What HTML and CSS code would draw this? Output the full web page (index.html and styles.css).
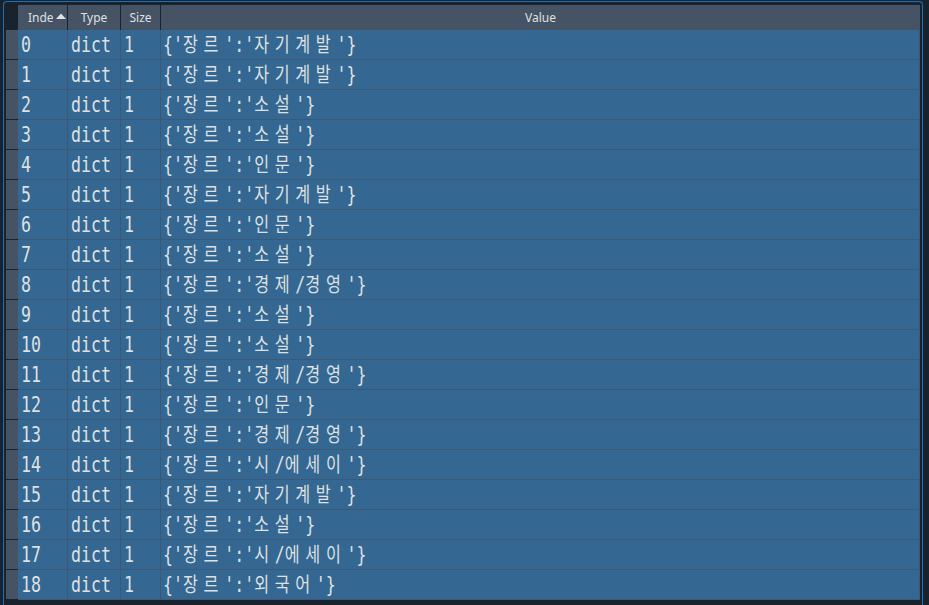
FILE: index.html
```html
<!DOCTYPE html>
<html lang="ko">
<head>
<meta charset="utf-8">
<title>Variable Explorer</title>
<link rel="stylesheet" href="styles.css">
</head>
<body>
<div class="frame">
  <div class="table">
    <div class="row head">
      <div class="rh corner"></div>
      <div class="hc idx"><span class="htxt">Index</span><svg class="sort" width="10" height="6" viewBox="0 0 10 6"><path d="M0 6 L5 0.5 L10 6 Z" fill="#dfe1e2"/></svg></div>
      <div class="hc">Type</div>
      <div class="hc">Size</div>
      <div class="hc last">Value</div>
    </div>
    <div class="row"><div class="rh"></div><div class="c"><span class="t">0</span></div><div class="c"><span class="t">dict</span></div><div class="c"><span class="t">1</span></div><div class="c v"><span class="t">{'<span class="k">장르</span>':'<span class="k">자기계발</span>'}</span></div></div>
    <div class="row"><div class="rh"></div><div class="c"><span class="t">1</span></div><div class="c"><span class="t">dict</span></div><div class="c"><span class="t">1</span></div><div class="c v"><span class="t">{'<span class="k">장르</span>':'<span class="k">자기계발</span>'}</span></div></div>
    <div class="row"><div class="rh"></div><div class="c"><span class="t">2</span></div><div class="c"><span class="t">dict</span></div><div class="c"><span class="t">1</span></div><div class="c v"><span class="t">{'<span class="k">장르</span>':'<span class="k">소설</span>'}</span></div></div>
    <div class="row"><div class="rh"></div><div class="c"><span class="t">3</span></div><div class="c"><span class="t">dict</span></div><div class="c"><span class="t">1</span></div><div class="c v"><span class="t">{'<span class="k">장르</span>':'<span class="k">소설</span>'}</span></div></div>
    <div class="row"><div class="rh"></div><div class="c"><span class="t">4</span></div><div class="c"><span class="t">dict</span></div><div class="c"><span class="t">1</span></div><div class="c v"><span class="t">{'<span class="k">장르</span>':'<span class="k">인문</span>'}</span></div></div>
    <div class="row"><div class="rh"></div><div class="c"><span class="t">5</span></div><div class="c"><span class="t">dict</span></div><div class="c"><span class="t">1</span></div><div class="c v"><span class="t">{'<span class="k">장르</span>':'<span class="k">자기계발</span>'}</span></div></div>
    <div class="row"><div class="rh"></div><div class="c"><span class="t">6</span></div><div class="c"><span class="t">dict</span></div><div class="c"><span class="t">1</span></div><div class="c v"><span class="t">{'<span class="k">장르</span>':'<span class="k">인문</span>'}</span></div></div>
    <div class="row"><div class="rh"></div><div class="c"><span class="t">7</span></div><div class="c"><span class="t">dict</span></div><div class="c"><span class="t">1</span></div><div class="c v"><span class="t">{'<span class="k">장르</span>':'<span class="k">소설</span>'}</span></div></div>
    <div class="row"><div class="rh"></div><div class="c"><span class="t">8</span></div><div class="c"><span class="t">dict</span></div><div class="c"><span class="t">1</span></div><div class="c v"><span class="t">{'<span class="k">장르</span>':'<span class="k">경제</span>/<span class="k">경영</span>'}</span></div></div>
    <div class="row"><div class="rh"></div><div class="c"><span class="t">9</span></div><div class="c"><span class="t">dict</span></div><div class="c"><span class="t">1</span></div><div class="c v"><span class="t">{'<span class="k">장르</span>':'<span class="k">소설</span>'}</span></div></div>
    <div class="row"><div class="rh"></div><div class="c"><span class="t">10</span></div><div class="c"><span class="t">dict</span></div><div class="c"><span class="t">1</span></div><div class="c v"><span class="t">{'<span class="k">장르</span>':'<span class="k">소설</span>'}</span></div></div>
    <div class="row"><div class="rh"></div><div class="c"><span class="t">11</span></div><div class="c"><span class="t">dict</span></div><div class="c"><span class="t">1</span></div><div class="c v"><span class="t">{'<span class="k">장르</span>':'<span class="k">경제</span>/<span class="k">경영</span>'}</span></div></div>
    <div class="row"><div class="rh"></div><div class="c"><span class="t">12</span></div><div class="c"><span class="t">dict</span></div><div class="c"><span class="t">1</span></div><div class="c v"><span class="t">{'<span class="k">장르</span>':'<span class="k">인문</span>'}</span></div></div>
    <div class="row"><div class="rh"></div><div class="c"><span class="t">13</span></div><div class="c"><span class="t">dict</span></div><div class="c"><span class="t">1</span></div><div class="c v"><span class="t">{'<span class="k">장르</span>':'<span class="k">경제</span>/<span class="k">경영</span>'}</span></div></div>
    <div class="row"><div class="rh"></div><div class="c"><span class="t">14</span></div><div class="c"><span class="t">dict</span></div><div class="c"><span class="t">1</span></div><div class="c v"><span class="t">{'<span class="k">장르</span>':'<span class="k">시</span>/<span class="k">에세이</span>'}</span></div></div>
    <div class="row"><div class="rh"></div><div class="c"><span class="t">15</span></div><div class="c"><span class="t">dict</span></div><div class="c"><span class="t">1</span></div><div class="c v"><span class="t">{'<span class="k">장르</span>':'<span class="k">자기계발</span>'}</span></div></div>
    <div class="row"><div class="rh"></div><div class="c"><span class="t">16</span></div><div class="c"><span class="t">dict</span></div><div class="c"><span class="t">1</span></div><div class="c v"><span class="t">{'<span class="k">장르</span>':'<span class="k">소설</span>'}</span></div></div>
    <div class="row"><div class="rh"></div><div class="c"><span class="t">17</span></div><div class="c"><span class="t">dict</span></div><div class="c"><span class="t">1</span></div><div class="c v"><span class="t">{'<span class="k">장르</span>':'<span class="k">시</span>/<span class="k">에세이</span>'}</span></div></div>
    <div class="row"><div class="rh"></div><div class="c"><span class="t">18</span></div><div class="c"><span class="t">dict</span></div><div class="c"><span class="t">1</span></div><div class="c v"><span class="t">{'<span class="k">장르</span>':'<span class="k">외국어</span>'}</span></div></div>
  </div>
</div>
</body>
</html>
```

FILE: styles.css
```css
html, body {
  margin: 0;
  padding: 0;
  background: #19232d;
  width: 929px;
  height: 605px;
  overflow: hidden;
}

.frame {
  box-sizing: border-box;
  margin: 1px 0 0 3px;
  width: 920px;
  height: 604px;
  border: 1px solid #1a72bb;
  border-bottom: none;
  border-radius: 4px 4px 0 0;
  padding: 3px 2px 0 2px;
}

.table {
  display: flex;
  flex-direction: column;
  width: 914px;
}

.row {
  display: grid;
  grid-template-columns: 12px 50px 53px 40px 1fr;
  height: 30px;
}

.row.head {
  height: 25px;
}

.rh {
  box-sizing: border-box;
  background: #455364;
  border-bottom: 1px solid #19232d;
}

.rh.corner {
  background: transparent;
  border-bottom: none;
}

.hc {
  box-sizing: border-box;
  background: #455364;
  border-right: 1px solid #19232d;
  color: #dfe1e2;
  font-family: "Noto Sans", "Open Sans", sans-serif;
  font-size: 12px;
  display: flex;
  align-items: center;
  justify-content: center;
  white-space: nowrap;
  overflow: hidden;
}

.hc.last {
  border-right: none;
}

.hc.idx {
  justify-content: flex-start;
  padding-left: 10px;
}

.htxt {
  display: block;
  width: 25px;
  overflow: hidden;
}

.sort {
  margin-left: 3px;
  margin-bottom: 3px;
  flex: none;
}

.c {
  box-sizing: border-box;
  background: #346792;
  border-right: 1px solid #3d5874;
  border-bottom: 1px solid #3d5874;
  padding-left: 3px;
  display: flex;
  align-items: center;
  overflow: hidden;
  color: #dfe1e2;
}

.c.v {
  padding-left: 2px;
}

.t {
  display: inline-block;
  font-family: "DejaVu Sans Mono", "Noto Sans CJK KR", monospace;
  font-size: 20.5px;
  line-height: 28px;
  white-space: nowrap;
  transform: scaleX(0.81);
  transform-origin: left center;
}

.k {
  font-family: "Noto Sans CJK KR", sans-serif;
  font-size: 20px;
  letter-spacing: 7px;
}
```
